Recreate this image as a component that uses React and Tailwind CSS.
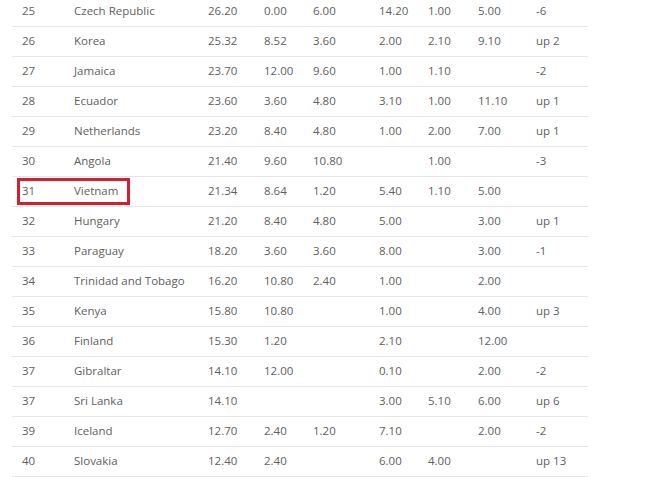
import React from 'react';

const rows = [
  ['25', 'Czech Republic', '26.20', '0.00', '6.00', '14.20', '1.00', '5.00', '-6'],
  ['26', 'Korea', '25.32', '8.52', '3.60', '2.00', '2.10', '9.10', 'up 2'],
  ['27', 'Jamaica', '23.70', '12.00', '9.60', '1.00', '1.10', '', '-2'],
  ['28', 'Ecuador', '23.60', '3.60', '4.80', '3.10', '1.00', '11.10', 'up 1'],
  ['29', 'Netherlands', '23.20', '8.40', '4.80', '1.00', '2.00', '7.00', 'up 1'],
  ['30', 'Angola', '21.40', '9.60', '10.80', '', '1.00', '', '-3'],
  ['31', 'Vietnam', '21.34', '8.64', '1.20', '5.40', '1.10', '5.00', ''],
  ['32', 'Hungary', '21.20', '8.40', '4.80', '5.00', '', '3.00', 'up 1'],
  ['33', 'Paraguay', '18.20', '3.60', '3.60', '8.00', '', '3.00', '-1'],
  ['34', 'Trinidad and Tobago', '16.20', '10.80', '2.40', '1.00', '', '2.00', ''],
  ['35', 'Kenya', '15.80', '10.80', '', '1.00', '', '4.00', 'up 3'],
  ['36', 'Finland', '15.30', '1.20', '', '2.10', '', '12.00', ''],
  ['37', 'Gibraltar', '14.10', '12.00', '', '0.10', '', '2.00', '-2'],
  ['37', 'Sri Lanka', '14.10', '', '', '3.00', '5.10', '6.00', 'up 6'],
  ['39', 'Iceland', '12.70', '2.40', '1.20', '7.10', '', '2.00', '-2'],
  ['40', 'Slovakia', '12.40', '2.40', '', '6.00', '4.00', '', 'up 13'],
];

export default function App() {
  return (
    <div className="w-[660px] h-[477px] overflow-hidden bg-white" style={{ fontFamily: '"Open Sans", "Noto Sans", sans-serif' }}>
      <div className="ml-[12px] mt-[-3px] w-[576px] text-[11.5px] text-[#606060]">
        {rows.map((r, i) => (
          <div
            key={i}
            className="relative grid grid-cols-[52px_134px_56px_49px_66px_49px_50px_58px_1fr] items-center h-[30px] px-[10px] pb-[2px] border-b border-[#e6e6e6]"
          >
            {r.map((c, j) => (
              <span key={j} className="whitespace-nowrap">{c}</span>
            ))}
            {r[1] === 'Vietnam' && (
              <span className="absolute left-[5px] top-[1px] w-[113px] h-[27px] border-[3px] border-[#d3202f]" />
            )}
          </div>
        ))}
      </div>
    </div>
  );
}
